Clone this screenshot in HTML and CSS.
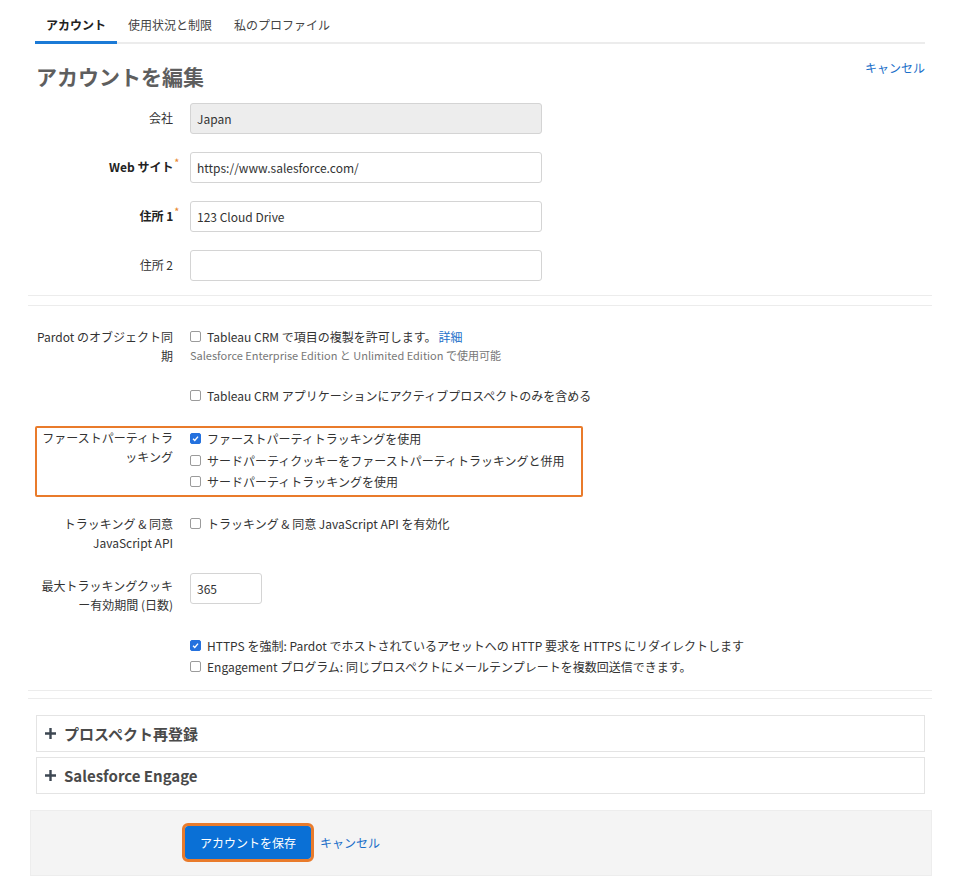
FILE: index.html
```html
<!DOCTYPE html>
<html lang="ja">
<head>
  <meta charset="UTF-8" />
  <title>アカウントを編集</title>
  <link rel="stylesheet" href="styles.css">
</head>
<body>
  <div class="page">
    <ul class="tabs">
      <li class="tab active">アカウント</li>
      <li class="tab">使用状況と制限</li>
      <li class="tab">私のプロファイル</li>
    </ul>

    <div class="page-header">
      <h1>アカウントを編集</h1>
      <a href="#" class="link">キャンセル</a>
    </div>

    <!-- basic account fields -->
    <div class="fieldset">
      <div class="row">
        <label class="row-label">会社</label>
        <div class="row-field"><input type="text" class="text-input" value="Japan" disabled></div>
      </div>
      <div class="row">
        <label class="row-label required">Web サイト<span class="req">*</span></label>
        <div class="row-field"><input type="text" class="text-input" value="https://www.salesforce.com/"></div>
      </div>
      <div class="row">
        <label class="row-label required">住所 1<span class="req">*</span></label>
        <div class="row-field"><input type="text" class="text-input" value="123 Cloud Drive"></div>
      </div>
      <div class="row last">
        <label class="row-label">住所 2</label>
        <div class="row-field"><input type="text" class="text-input" value=""></div>
      </div>
    </div>

    <!-- tracking settings -->
    <div class="fieldset settings">
      <div class="row">
        <div class="row-label text">Pardot のオブジェクト同期</div>
        <div class="row-field">
          <div class="option"><span class="cb"></span>Tableau CRM で項目の複製を許可します。<a href="#" class="link">詳細</a></div>
          <div class="hint">Salesforce Enterprise Edition と Unlimited Edition で使用可能</div>
        </div>
      </div>
      <div class="row">
        <div class="row-label text"></div>
        <div class="row-field">
          <div class="option"><span class="cb"></span>Tableau CRM アプリケーションにアクティブプロスペクトのみを含める</div>
        </div>
      </div>
      <div class="row highlight">
        <div class="row-label text">ファーストパーティトラッキング</div>
        <div class="row-field">
          <div class="option"><span class="cb checked"><svg viewBox="0 0 11 11"><path d="M2.5 5.8 L4.6 7.8 L8.6 3.2" /></svg></span>ファーストパーティトラッキングを使用</div>
          <div class="option"><span class="cb"></span>サードパーティクッキーをファーストパーティトラッキングと併用</div>
          <div class="option"><span class="cb"></span>サードパーティトラッキングを使用</div>
        </div>
      </div>
      <div class="row">
        <div class="row-label text">トラッキング &amp; 同意 JavaScript API</div>
        <div class="row-field">
          <div class="option"><span class="cb"></span>トラッキング &amp; 同意 JavaScript API を有効化</div>
        </div>
      </div>
      <div class="row">
        <div class="row-label text pad">最大トラッキングクッキー有効期間 (日数)</div>
        <div class="row-field"><input type="text" class="text-input short" value="365"></div>
      </div>
      <div class="row last">
        <div class="row-label text"></div>
        <div class="row-field">
          <div class="option"><span class="cb checked"><svg viewBox="0 0 11 11"><path d="M2.5 5.8 L4.6 7.8 L8.6 3.2" /></svg></span>HTTPS を強制: Pardot でホストされているアセットへの HTTP 要求を HTTPS にリダイレクトします</div>
          <div class="option"><span class="cb"></span>Engagement プログラム: 同じプロスペクトにメールテンプレートを複数回送信できます。</div>
        </div>
      </div>
    </div>

    <div class="panels">
      <div class="panel">
        <svg class="plus" viewBox="0 0 12 12"><path d="M4.7 0 H7.3 V4.7 H12 V7.3 H7.3 V12 H4.7 V7.3 H0 V4.7 H4.7 Z" /></svg>
        <span class="panel-title">プロスペクト再登録</span>
      </div>
      <div class="panel">
        <svg class="plus" viewBox="0 0 12 12"><path d="M4.7 0 H7.3 V4.7 H12 V7.3 H7.3 V12 H4.7 V7.3 H0 V4.7 H4.7 Z" /></svg>
        <span class="panel-title">Salesforce Engage</span>
      </div>
    </div>

    <div class="form-actions">
      <button class="btn-primary">アカウントを保存</button>
      <a href="#" class="link">キャンセル</a>
    </div>
  </div>
</body>
</html>
```

FILE: styles.css
```css
body {
  margin: 0;
  padding: 0;
  background-color: #fff;
  font-family: "Noto Sans CJK JP", "Open Sans", sans-serif;
  font-size: 12px;
  color: #333;
}
.page {
  margin: 0 30px 0 28px;
}
.link {
  color: #1a6fc9;
  text-decoration: none;
}

/* tabs */
.tabs {
  display: flex;
  list-style: none;
  margin: 0 7px;
  padding: 0;
  border-bottom: 2px solid #ececec;
}
.tab {
  padding: 17px 11px 8px;
  line-height: 16px;
  font-size: 12px;
  color: #444;
  margin-bottom: -2px;
  border-bottom: 3px solid transparent;
}
.tab.active {
  font-weight: bold;
  color: #222;
  border-bottom-color: #1b7ad6;
}

/* header */
.page-header {
  display: flex;
  justify-content: space-between;
  align-items: flex-start;
  margin: 18px 7px 0 8px;
}
h1 {
  margin: 0;
  font-size: 21px;
  line-height: 28px;
  color: #5e5e5e;
}
.page-header .link {
  line-height: 14px;
  margin-top: -1px;
}

/* form rows */
.fieldset {
  padding: 13px 0 14px;
  border-bottom: 1px solid #ececec;
}
.fieldset.settings {
  margin-top: 9px;
  border-top: 1px solid #ececec;
  padding: 21px 0 12px;
}
.row {
  display: grid;
  grid-template-columns: 145px 1fr;
  column-gap: 17px;
  margin-bottom: 18px;
}
.settings .row {
  margin-bottom: 21px;
}
.row.last,
.settings .row.last {
  margin-bottom: 0;
}
.row-label {
  text-align: right;
  line-height: 19px;
  padding: 5px 0 0 6px;
  color: #333;
}
.row-label.text {
  padding-top: 0;
}
.row-label.pad {
  padding-top: 3px;
}
.row-label.required {
  font-weight: bold;
  color: #222;
}
.req {
  color: #e8892f;
  font-size: 9px;
  vertical-align: top;
  line-height: 12px;
  margin-right: -6px;
  margin-left: 1px;
}
.text-input {
  box-sizing: border-box;
  width: 352px;
  height: 31px;
  padding: 0 6px;
  border: 1px solid #d4d4d4;
  border-radius: 3px;
  font-family: inherit;
  font-size: 12px;
  color: #333;
  background: #fff;
}
.text-input:disabled {
  background-color: #ededed;
  color: #333;
}
.text-input.short {
  width: 72px;
}

/* checkboxes */
.option {
  display: flex;
  align-items: center;
  line-height: 19px;
  color: #333;
}
.row.last .option {
  line-height: 21.5px;
}
.cb {
  box-sizing: border-box;
  width: 11px;
  height: 11px;
  border: 1px solid #9b9b9b;
  border-radius: 2px;
  margin-right: 6px;
  background: #fff;
  flex-shrink: 0;
}
.cb svg {
  display: block;
  width: 100%;
  height: 100%;
}
.cb.checked {
  background-color: #2471de;
  border-color: #2471de;
}
.cb.checked path {
  fill: none;
  stroke: #fff;
  stroke-width: 1.7;
}
.option .link {
  margin-left: 2px;
}
.hint {
  font-size: 11px;
  line-height: 19px;
  color: #777;
}

/* highlighted block */
.row.highlight {
  margin-left: 7px;
  width: 544px;
  grid-template-columns: 136px 1fr;
  border: 2px solid #e97b2b;
  border-radius: 2px;
  padding-bottom: 2px;
  margin-bottom: 17px;
}
.highlight .row-label {
  padding-left: 2px;
}
.highlight .option {
  line-height: 21.5px;
}

/* collapsible panels */
.panels {
  margin-top: 7px;
  border-top: 1px solid #ececec;
  padding: 16px 7px 0 8px;
}
.panel {
  display: flex;
  align-items: center;
  height: 35px;
  border: 1px solid #e4e4e4;
  margin-bottom: 5px;
  padding-left: 8px;
}
.plus {
  width: 11px;
  height: 11px;
  fill: #3d4752;
  margin-right: 8px;
}
.panel-title {
  font-size: 15px;
  font-weight: bold;
  color: #4a4a4a;
}

/* footer actions */
.form-actions {
  display: flex;
  align-items: center;
  margin: 16px 0 0 2px;
  height: 66px;
  padding-left: 154px;
  background-color: #f4f4f4;
  border: 1px solid #ededed;
  box-sizing: border-box;
}
.btn-primary {
  width: 126px;
  height: 33px;
  border: 0;
  border-radius: 3px;
  background-color: #0a70d6;
  color: #fff;
  font-family: inherit;
  font-size: 12px;
  outline: 3px solid #e97b2b;
  margin-right: 9px;
}
```
